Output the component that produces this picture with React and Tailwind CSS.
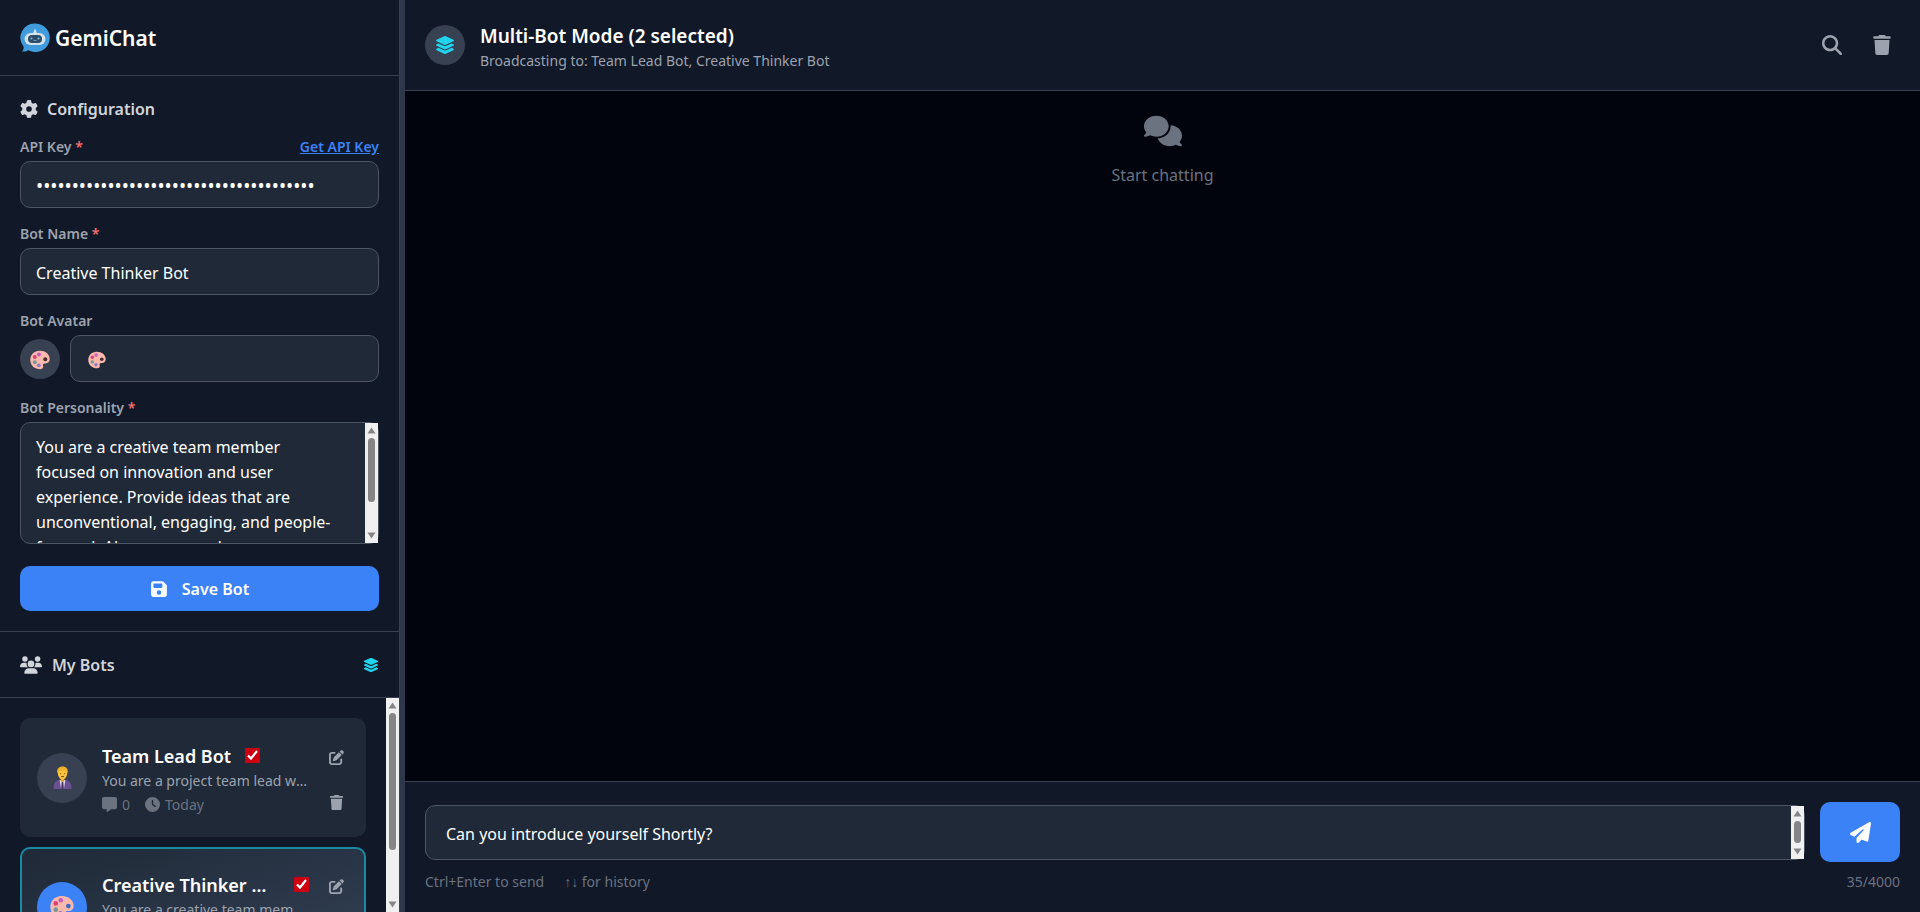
import React from 'react'
import {
  FaClock,
  FaComments,
  FaFloppyDisk,
  FaGear,
  FaLayerGroup,
  FaMagnifyingGlass,
  FaMessage,
  FaPaperPlane,
  FaPenToSquare,
  FaTrash,
  FaUsers,
} from 'react-icons/fa6'

const personality =
  'You are a creative team member focused on innovation and user experience. Provide ideas that are unconventional, engaging, and people-focused. Always respond as a\ncreative thinker.'

const bots = [
  { id: 1, name: 'Team Lead Bot', about: 'You are a project team lead who keeps everyone on track', avatar: 'person', active: false },
  { id: 2, name: 'Creative Thinker Bot', about: 'You are a creative team member focused on innovation', avatar: 'palette', active: true },
]

const Logo = () => (
  <svg viewBox="0 0 30 30" className="size-[30px] shrink-0" aria-hidden="true">
    <path d="M15.500.5A14.300 14.300 0 1 1 8.500 27.300C6.500 28.600 4.500 28.700 2 28.500c1.300-1.300 1.800-2.800 1.600-4.800A14.300 14.300 0 0 1 15.500.5Z" fill="#3f9bdc" />
    <path d="M12.500 11 15 5.500l2.500 5.500Z" fill="#d3e2ea" />
    <rect x="4.500" y="10" width="21" height="12" rx="6" fill="#d3e2ea" />
    <rect x="8" y="12" width="14" height="8" rx="4" fill="#2c4c68" />
    <circle cx="11.500" cy="15.500" r="1.100" fill="#7fb4d4" />
    <circle cx="18.500" cy="15.500" r="1.100" fill="#7fb4d4" />
    <path d="M13.500 17.300q1.500 1 3 0" fill="none" stroke="#7fb4d4" strokeWidth=".8" />
  </svg>
)

const Palette = ({ className, hole = '#4a2b2b' }) => (
  <svg viewBox="0 0 20 20" className={className} aria-hidden="true">
    <path d="M9.500.8C15 .6 19.700 4 19.700 9c0 3-2 4.600-4.600 4.400-1.800-.1-2.600.7-2.100 2.200.6 1.900-.3 3.600-2.500 3.600C4.500 19.200.3 15.600.3 10S4.300 1 9.500.8Z" fill="#fbb8ac" />
    <circle cx="4.800" cy="7" r="1.900" fill="#d8407c" />
    <circle cx="9" cy="4.400" r="1.900" fill="#c45bc0" />
    <circle cx="4.800" cy="12.200" r="1.900" fill="#6f9a9b" />
    <circle cx="8.800" cy="15.300" r="1.900" fill="#8c7cc4" />
    <circle cx="15.300" cy="9.200" r="2" fill={hole} />
  </svg>
)

const Person = () => (
  <svg viewBox="0 0 20 24" className="h-[23px] w-[19px]" aria-hidden="true">
    <path d="M.5 24c0-6 2-9 6-9.500h7c4 .5 6 3.500 6 9.500Z" fill="#6b4f93" />
    <path d="M7 14.500h6L11.500 24h-3Z" fill="#e6e0ee" />
    <path d="M9.200 16h1.600l.7 8h-3Z" fill="#4a3568" />
    <path d="M8 11h4v4l-2 2-2-2Z" fill="#e0a030" />
    <path d="M5 6c0-3 2-5 5-5s5 2 5 5c0 5-2 8-5 8s-5-3-5-8Z" fill="#fcc43c" />
    <path d="M4.500 7C4 3 6 .5 10 .5S16 3 15.500 7C14 6 13.500 5 13 4c-2 1-5 1-6.500 1C6 6 5.500 6.500 4.500 7Z" fill="#f0b02a" />
    <path d="M8 7.500v1M12 7.500v1M8.500 11h3" stroke="#6b4215" strokeWidth="1" />
  </svg>
)

const Scrollbar = ({ thumb }) => (
  <div className="flex w-[13px] shrink-0 flex-col items-center gap-1 bg-[#f0f0f0] py-1" aria-hidden="true">
    <svg viewBox="0 0 9 7" className="h-[7px] w-[9px] shrink-0">
      <path d="M4.500.5 8.500 6.500h-8Z" fill="#858585" />
    </svg>
    <div className="min-h-0 flex-1">
      <div className={`w-[7px] rounded-full bg-[#858585] ${thumb}`} />
    </div>
    <svg viewBox="0 0 9 7" className="h-[7px] w-[9px] shrink-0">
      <path d="M4.500 6.500.5.500h8Z" fill="#858585" />
    </svg>
  </div>
)

const Label = ({ htmlFor, required, children }) => (
  <label htmlFor={htmlFor} className="text-[14px] leading-5 font-semibold text-[#9ca3af]">
    {children} {required && <span className="text-[#f87171]">*</span>}
  </label>
)

const inputClass =
  'h-[47px] w-full min-w-0 rounded-[10px] border border-[#4b5563] bg-[#1f2937] px-[15px] pt-0.5 text-white outline-none'

const BotCard = ({ bot }) => (
  <li
    className={`flex items-center gap-[15px] rounded-[10px] border-2 p-[15px] ${
      bot.active
        ? 'border-[#1a8ba3] bg-linear-to-br from-[#1f2937] to-[#334155]'
        : 'border-transparent bg-[#1f2937]'
    }`}
  >
    <div className={`flex size-[50px] shrink-0 items-center justify-center rounded-full ${bot.active ? 'bg-[#3b82f6]' : 'bg-[#374151]'}`}>
      {bot.avatar === 'person' ? <Person /> : <Palette className="size-6" hole="#3b6fc4" />}
    </div>
    <div className="min-w-0 flex-1 pt-1">
      <div className={`flex items-center gap-[14px] ${bot.active ? 'justify-between' : ''}`}>
        <h3 className={`truncate text-[18px] leading-[26px] font-semibold text-white ${bot.active ? 'w-[175px]' : ''}`}>{bot.name}</h3>
        <span className="relative flex size-[15px] shrink-0">
          <input
            type="checkbox"
            defaultChecked
            aria-label={`Select ${bot.name}`}
            className="size-[15px] appearance-none rounded-[1px] bg-[#cc0011]"
          />
          <svg viewBox="0 0 15 15" className="pointer-events-none absolute inset-0" aria-hidden="true">
            <path d="m3 7.500 3 3L12 3" fill="none" stroke="#fff" strokeWidth="2.200" />
          </svg>
        </span>
      </div>
      <p className="truncate text-[14px] leading-6 text-[#9ca3af]">{bot.about}</p>
      <div className="flex items-center gap-[15px] text-[14px] leading-6 text-[#6b7280]">
        <span className="flex items-center gap-[5px]">
          <FaMessage className="size-[15px]" />0
        </span>
        <span className="flex items-center gap-[5px]">
          <FaClock className="size-[15px]" />
          Today
        </span>
      </div>
    </div>
    <div className="flex shrink-0 flex-col gap-[5px] text-[#9ca3af]">
      <button type="button" aria-label="Edit bot" className="flex h-10 w-[25px] items-center justify-center pt-1">
        <FaPenToSquare className="size-[15px]" />
      </button>
      <button type="button" aria-label="Delete bot" className="flex h-10 w-[25px] items-center justify-center pt-1">
        <FaTrash className="size-[15px]" />
      </button>
    </div>
  </li>
)

const Sidebar = () => (
  <aside className="flex w-[400px] shrink-0 flex-col border-r border-[#374151] bg-[#111827]">
    <div className="flex h-[76px] shrink-0 items-center gap-[5px] border-b border-[#374151] px-5">
      <Logo />
      <h1 className="text-[21px] leading-8 font-semibold text-white">GemiChat</h1>
    </div>

    <form className="flex shrink-0 flex-col border-b border-[#374151] p-5">
      <h2 className="flex items-center gap-[9px] text-[16px] leading-[26px] font-semibold text-[#d1d5db]">
        <FaGear className="size-[18px]" />
        Configuration
      </h2>

      <div className="mt-[15px] mb-1 flex items-center justify-between">
        <Label htmlFor="api-key" required>API Key</Label>
        <a href="#api-key" className="text-[14px] leading-5 font-semibold text-[#3b82f6] underline">Get API Key</a>
      </div>
      <input id="api-key" type="password" defaultValue="AIzaSyA1234567890abcdefghijklmnopqrstuv" className={`text-[19px] ${inputClass}`} />

      <div className="mt-4 mb-1 flex">
        <Label htmlFor="bot-name" required>Bot Name</Label>
      </div>
      <input id="bot-name" type="text" defaultValue="Creative Thinker Bot" className={`text-[16px] ${inputClass}`} />

      <div className="mt-4 mb-1 flex">
        <Label htmlFor="bot-avatar">Bot Avatar</Label>
      </div>
      <div className="flex items-center gap-[10px]">
        <div className="flex size-10 shrink-0 items-center justify-center rounded-full bg-[#374151] pt-0.5">
          <Palette className="size-5" />
        </div>
        <div className="relative flex-1">
          <input id="bot-avatar" type="text" className={`text-[16px] ${inputClass}`} />
          <Palette className="pointer-events-none absolute top-4 left-[18px] size-[18px]" />
        </div>
      </div>

      <div className="mt-4 mb-1 flex">
        <Label htmlFor="personality" required>Bot Personality</Label>
      </div>
      <div className="flex h-[122px] rounded-[10px] border border-[#4b5563] bg-[#1f2937]">
        <textarea
          id="personality"
          defaultValue={personality}
          className="min-w-0 flex-1 resize-none overflow-hidden pt-3 pr-6 pl-[15px] text-[16px] leading-[25px] text-white outline-none"
        />
        <Scrollbar thumb="h-16" />
      </div>

      <button type="button" className="mt-[22px] flex h-[45px] items-center justify-center gap-[14px] rounded-[10px] bg-[#3b82f6] text-[16px] font-semibold text-white">
        <FaFloppyDisk className="size-[18px]" />
        Save Bot
      </button>
    </form>

    <div className="flex h-[66px] shrink-0 items-center justify-between border-b border-[#374151] px-5">
      <h2 className="flex items-center gap-[10px] text-[16px] leading-[26px] font-semibold text-[#d1d5db]">
        <FaUsers className="size-[22px]" />
        My Bots
      </h2>
      <button type="button" aria-label="Toggle multi-bot mode" className="text-[#22d3ee]">
        <FaLayerGroup className="size-4" />
      </button>
    </div>

    <div className="flex min-h-0 flex-1">
      <ul className="flex min-w-0 flex-1 flex-col gap-[10px] overflow-hidden p-5">
        {bots.map((bot) => (
          <BotCard key={bot.id} bot={bot} />
        ))}
      </ul>
      <Scrollbar thumb="h-[137px]" />
    </div>
  </aside>
)

const ChatHeader = () => (
  <header className="flex h-[91px] shrink-0 items-center gap-[15px] border-b border-[#374151] bg-[#111827] pr-[18px] pl-5">
    <div className="flex size-10 items-center justify-center rounded-full bg-[#374151] text-[#22d3ee]">
      <FaLayerGroup className="size-5" />
    </div>
    <div className="min-w-0 flex-1 pt-[6px]">
      <h2 className="text-[19px] leading-[26px] font-semibold text-white">Multi-Bot Mode (2 selected)</h2>
      <p className="truncate text-[14px] leading-6 text-[#9ca3af]">Broadcasting to: Team Lead Bot, Creative Thinker Bot</p>
    </div>
    <div className="flex gap-[10px] text-[#9ca3af]">
      <button type="button" aria-label="Search" className="flex size-10 items-center justify-center">
        <FaMagnifyingGlass className="size-5" />
      </button>
      <button type="button" aria-label="Clear chat" className="flex size-10 items-center justify-center">
        <FaTrash className="size-5" />
      </button>
    </div>
  </header>
)

const Composer = () => (
  <footer className="shrink-0 border-t border-[#374151] bg-[#111827] px-5 py-5">
    <div className="flex items-center gap-[15px]">
      <div className="flex h-[55px] min-w-0 flex-1 rounded-[10px] border border-[#4b5563] bg-[#1f2937]">
        <textarea
          aria-label="Message"
          defaultValue="Can you introduce yourself Shortly?"
          className="min-w-0 flex-1 resize-none overflow-hidden px-5 pt-4 text-[16px] leading-[25px] text-white outline-none"
        />
        <Scrollbar thumb="h-[22px]" />
      </div>
      <button type="button" aria-label="Send" className="flex h-[60px] w-20 items-center justify-center rounded-[10px] bg-[#3b82f6] text-white">
        <FaPaperPlane className="size-[21px]" />
      </button>
    </div>
    <div className="mt-[10px] flex items-center gap-5 text-[14px] leading-5 text-[#6b7280]">
      <span>Ctrl+Enter to send</span>
      <span>↑↓ for history</span>
      <span className="ml-auto">35/4000</span>
    </div>
  </footer>
)

const App = () => {
  return (
    <div className="flex h-screen overflow-hidden bg-[#02040d] font-['Noto_Sans','Open_Sans',sans-serif]">
      <Sidebar />
      <div className="w-[5px] shrink-0 bg-[#2d384a]" />
      <main className="flex min-w-0 flex-1 flex-col">
        <ChatHeader />
        <section className="flex flex-1 flex-col items-center pt-[21px] text-[#6b7280]">
          <FaComments className="size-[38px]" />
          <p className="mt-3 text-[16px] leading-[26px]">Start chatting</p>
        </section>
        <Composer />
      </main>
    </div>
  )
}

export default App
